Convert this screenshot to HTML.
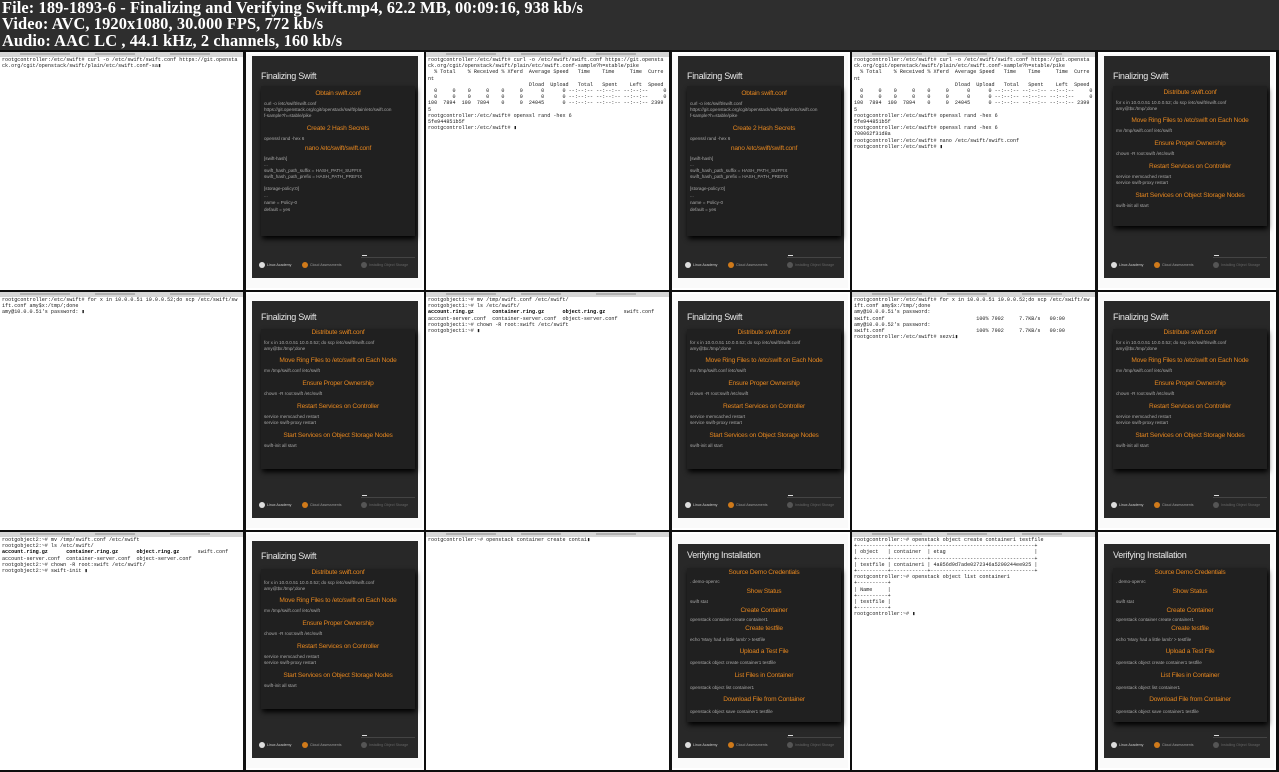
<!DOCTYPE html>
<html><head><meta charset="utf-8">
<style>
*{margin:0;padding:0;box-sizing:border-box}
html,body{width:1279px;height:772px;background:#0e0e0e;overflow:hidden}
.hdr{position:absolute;left:0;top:0;width:1279px;height:50px;background:#2e2e2e;color:#fff;font:bold 16.4px/16.4px "Liberation Serif",serif;padding:0 0 0 2px;white-space:pre;letter-spacing:0.1px}
.cell{position:absolute;width:424px;height:238px;background:#fff;overflow:hidden}
.tabs{position:absolute;left:0;top:0;width:243px;height:5px;background:#d6d6d6}
.tabs i{position:absolute;top:1px;height:2px;background:#b0b0b0}
.term{position:absolute;left:2px;top:5px;width:241px;font:5.1px/6.2px "Liberation Mono",monospace;color:#1a1a1a;white-space:pre;overflow:hidden}
.term b{font-weight:bold;color:#000}
.sep{position:absolute;left:243px;top:0;width:3px;height:238px;background:#111}
.frame{position:absolute;left:246px;top:2px;width:176px;height:234px;background:#fafafa}
.panel{position:absolute;left:252px;top:7px;width:166px;height:219px;background:#282828}
.title{position:absolute;left:261px;font:9px "Liberation Sans",sans-serif;color:#e6e6e6;letter-spacing:-0.3px}
.card{position:absolute;left:261px;top:36px;width:154px;background:#202020;box-shadow:1px 3px 5px #000}
.h{position:absolute;left:261px;width:154px;text-align:center;font:6.6px "Liberation Sans",sans-serif;color:#e5861f;letter-spacing:-0.2px;white-space:nowrap}
.b{position:absolute;left:264px;font:4.6px "Liberation Sans",sans-serif;color:#a8a8a8;white-space:nowrap}
.ft{position:absolute;top:211px;font:3.6px "Liberation Sans",sans-serif;color:#ccc;white-space:nowrap}
.cir{position:absolute;top:210px;width:6px;height:6px;border-radius:50%}
.ln{position:absolute;top:205px;left:361px;width:54px;height:1px;background:#444}
.dash{position:absolute;top:203px;left:362px;width:5px;height:1px;background:#ddd}
</style></head><body>
<div class="hdr">File: 189-1893-6 - Finalizing and Verifying Swift.mp4, 62.2 MB, 00:09:16, 938 kb/s
Video: AVC, 1920x1080, 30.000 FPS, 772 kb/s
Audio: AAC LC , 44.1 kHz, 2 channels, 160 kb/s</div>

<!-- CELL 1 -->
<div class="cell" style="left:0;top:52px">
<div class="tabs"><i style="left:20px;width:50px"></i><i style="left:95px;width:40px"></i><i style="left:170px;width:40px"></i></div>
<div class="term">rootgcontroller:/etc/swift# curl -o /etc/swift/swift.conf https://git.opensta
ck.org/cgit/openstack/swift/plain/etc/swift.conf-sa▮</div>
<div class="sep"></div><div class="frame"></div><div class="panel" style="top:4px;height:222px"></div>
<div class="title" style="top:19px">Finalizing Swift</div>
<div class="card" style="height:150px;top:34px"></div>
<div class="h" style="top:38px">Obtain swift.conf</div>
<div class="b" style="top:49px">curl -o /etc/swift/swift.conf</div>
<div class="b" style="top:55px">https://git.openstack.org/cgit/openstack/swift/plain/etc/swift.con</div>
<div class="b" style="top:61px">f-sample?h=stable/pike</div>
<div class="h" style="top:73px">Create 2 Hash Secrets</div>
<div class="b" style="top:84px">openssl rand -hex 6</div>
<div class="h" style="top:93px">nano /etc/swift/swift.conf</div>
<div class="b" style="top:104px">[swift-hash]</div>
<div class="b" style="top:110px">...</div>
<div class="b" style="top:116px">swift_hash_path_suffix = HASH_PATH_SUFFIX</div>
<div class="b" style="top:122px">swift_hash_path_prefix = HASH_PATH_PREFIX</div>
<div class="b" style="top:134px">[storage-policy:0]</div>
<div class="b" style="top:141px">...</div>
<div class="b" style="top:148px">name = Policy-0</div>
<div class="b" style="top:155px">default = yes</div>
<div class="ln"></div><div class="dash"></div>
<div class="cir" style="left:259px;background:#ddd"></div><div class="ft" style="left:267px">Linux Academy</div>
<div class="cir" style="left:302px;background:#d07a1a"></div><div class="ft" style="left:310px;color:#999">Cloud Assessments</div>
<div class="cir" style="left:361px;background:#555"></div><div class="ft" style="left:369px;color:#666">Installing Object Storage</div>
</div>

<!-- CELL 2 -->
<div class="cell" style="left:426px;top:52px">
<div class="tabs"><i style="left:20px;width:50px"></i><i style="left:95px;width:40px"></i><i style="left:170px;width:40px"></i></div>
<div class="term">rootgcontroller:/etc/swift# curl -o /etc/swift/swift.conf https://git.opensta
ck.org/cgit/openstack/swift/plain/etc/swift.conf-sample?h=stable/pike
  % Total    % Received % Xferd  Average Speed   Time    Time     Time  Curre
nt
                                 Dload  Upload   Total   Spent    Left  Speed
  0     0    0     0    0     0      0      0 --:--:-- --:--:-- --:--:--     0
  0     0    0     0    0     0      0      0 --:--:-- --:--:-- --:--:--     0
100  7894  100  7894    0     0  24045      0 --:--:-- --:--:-- --:--:-- 2399
5
rootgcontroller:/etc/swift# openssl rand -hex 6
5fe944851b5f
rootgcontroller:/etc/swift# ▮</div>
<div class="sep"></div><div class="frame"></div><div class="panel" style="top:4px;height:222px"></div>
<div class="title" style="top:19px">Finalizing Swift</div>
<div class="card" style="height:150px;top:34px"></div>
<div class="h" style="top:38px">Obtain swift.conf</div>
<div class="b" style="top:49px">curl -o /etc/swift/swift.conf</div>
<div class="b" style="top:55px">https://git.openstack.org/cgit/openstack/swift/plain/etc/swift.con</div>
<div class="b" style="top:61px">f-sample?h=stable/pike</div>
<div class="h" style="top:73px">Create 2 Hash Secrets</div>
<div class="b" style="top:84px">openssl rand -hex 6</div>
<div class="h" style="top:93px">nano /etc/swift/swift.conf</div>
<div class="b" style="top:104px">[swift-hash]</div>
<div class="b" style="top:110px">...</div>
<div class="b" style="top:116px">swift_hash_path_suffix = HASH_PATH_SUFFIX</div>
<div class="b" style="top:122px">swift_hash_path_prefix = HASH_PATH_PREFIX</div>
<div class="b" style="top:134px">[storage-policy:0]</div>
<div class="b" style="top:141px">...</div>
<div class="b" style="top:148px">name = Policy-0</div>
<div class="b" style="top:155px">default = yes</div>
<div class="ln"></div><div class="dash"></div>
<div class="cir" style="left:259px;background:#ddd"></div><div class="ft" style="left:267px">Linux Academy</div>
<div class="cir" style="left:302px;background:#d07a1a"></div><div class="ft" style="left:310px;color:#999">Cloud Assessments</div>
<div class="cir" style="left:361px;background:#555"></div><div class="ft" style="left:369px;color:#666">Installing Object Storage</div>
</div>

<!-- CELL 3 -->
<div class="cell" style="left:852px;top:52px">
<div class="tabs"><i style="left:20px;width:50px"></i><i style="left:95px;width:40px"></i><i style="left:170px;width:40px"></i></div>
<div class="term">rootgcontroller:/etc/swift# curl -o /etc/swift/swift.conf https://git.opensta
ck.org/cgit/openstack/swift/plain/etc/swift.conf-sample?h=stable/pike
  % Total    % Received % Xferd  Average Speed   Time    Time     Time  Curre
nt
                                 Dload  Upload   Total   Spent    Left  Speed
  0     0    0     0    0     0      0      0 --:--:-- --:--:-- --:--:--     0
  0     0    0     0    0     0      0      0 --:--:-- --:--:-- --:--:--     0
100  7894  100  7894    0     0  24045      0 --:--:-- --:--:-- --:--:-- 2399
5
rootgcontroller:/etc/swift# openssl rand -hex 6
5fe944851b5f
rootgcontroller:/etc/swift# openssl rand -hex 6
700062f31d8a
rootgcontroller:/etc/swift# nano /etc/swift/swift.conf
rootgcontroller:/etc/swift# ▮</div>
<div class="sep"></div><div class="frame"></div><div class="panel" style="top:4px;height:222px"></div>
<div class="title" style="top:19px">Finalizing Swift</div>
<div class="card" style="height:140px;top:34px"></div>
<div class="h" style="top:37px">Distribute swift.conf</div>
<div class="b" style="top:48px">for x in 10.0.0.51 10.0.0.52; do scp /etc/swift/swift.conf</div>
<div class="b" style="top:54px">amy@$x:/tmp/;done</div>
<div class="h" style="top:65px">Move Ring Files to /etc/swift on Each Node</div>
<div class="b" style="top:76px">mv /tmp/swift.conf /etc/swift</div>
<div class="h" style="top:88px">Ensure Proper Ownership</div>
<div class="b" style="top:99px">chown -R root:swift /etc/swift</div>
<div class="h" style="top:111px">Restart Services on Controller</div>
<div class="b" style="top:122px">service memcached restart</div>
<div class="b" style="top:128px">service swift-proxy restart</div>
<div class="h" style="top:140px">Start Services on Object Storage Nodes</div>
<div class="b" style="top:151px">swift-init all start</div>
<div class="ln"></div><div class="dash"></div>
<div class="cir" style="left:259px;background:#ddd"></div><div class="ft" style="left:267px">Linux Academy</div>
<div class="cir" style="left:302px;background:#d07a1a"></div><div class="ft" style="left:310px;color:#999">Cloud Assessments</div>
<div class="cir" style="left:361px;background:#555"></div><div class="ft" style="left:369px;color:#666">Installing Object Storage</div>
</div>

<!-- CELL 4 -->
<div class="cell" style="left:0;top:292px">
<div class="tabs"><i style="left:20px;width:50px"></i><i style="left:95px;width:40px"></i><i style="left:170px;width:40px"></i></div>
<div class="term">rootgcontroller:/etc/swift# for x in 10.0.0.51 10.0.0.52;do scp /etc/swift/sw
ift.conf amy$x:/tmp/;done
amy@10.0.0.51's password: ▮</div>
<div class="sep"></div><div class="frame"></div><div class="panel" style="top:9px;height:217px"></div>
<div class="title" style="top:20px">Finalizing Swift</div>
<div class="card" style="height:140px;top:37px"></div>
<div class="h" style="top:37px">Distribute swift.conf</div>
<div class="b" style="top:48px">for x in 10.0.0.51 10.0.0.52; do scp /etc/swift/swift.conf</div>
<div class="b" style="top:54px">amy@$x:/tmp/;done</div>
<div class="h" style="top:65px">Move Ring Files to /etc/swift on Each Node</div>
<div class="b" style="top:76px">mv /tmp/swift.conf /etc/swift</div>
<div class="h" style="top:88px">Ensure Proper Ownership</div>
<div class="b" style="top:99px">chown -R root:swift /etc/swift</div>
<div class="h" style="top:111px">Restart Services on Controller</div>
<div class="b" style="top:122px">service memcached restart</div>
<div class="b" style="top:128px">service swift-proxy restart</div>
<div class="h" style="top:140px">Start Services on Object Storage Nodes</div>
<div class="b" style="top:151px">swift-init all start</div>
<div class="ln"></div><div class="dash"></div>
<div class="cir" style="left:259px;background:#ddd"></div><div class="ft" style="left:267px">Linux Academy</div>
<div class="cir" style="left:302px;background:#d07a1a"></div><div class="ft" style="left:310px;color:#999">Cloud Assessments</div>
<div class="cir" style="left:361px;background:#555"></div><div class="ft" style="left:369px;color:#666">Installing Object Storage</div>
</div>

<!-- CELL 5 -->
<div class="cell" style="left:426px;top:292px">
<div class="tabs"><i style="left:20px;width:50px"></i><i style="left:95px;width:40px"></i><i style="left:170px;width:40px"></i></div>
<div class="term">rootgobject1:~# mv /tmp/swift.conf /etc/swift/
rootgobject1:~# ls /etc/swift/
<b>account.ring.gz</b>      <b>container.ring.gz</b>      <b>object.ring.gz</b>      swift.conf
account-server.conf  container-server.conf  object-server.conf
rootgobject1:~# chown -R root:swift /etc/swift
rootgobject1:~# ▮</div>
<div class="sep"></div><div class="frame"></div><div class="panel" style="top:9px;height:217px"></div>
<div class="title" style="top:20px">Finalizing Swift</div>
<div class="card" style="height:140px;top:37px"></div>
<div class="h" style="top:37px">Distribute swift.conf</div>
<div class="b" style="top:48px">for x in 10.0.0.51 10.0.0.52; do scp /etc/swift/swift.conf</div>
<div class="b" style="top:54px">amy@$x:/tmp/;done</div>
<div class="h" style="top:65px">Move Ring Files to /etc/swift on Each Node</div>
<div class="b" style="top:76px">mv /tmp/swift.conf /etc/swift</div>
<div class="h" style="top:88px">Ensure Proper Ownership</div>
<div class="b" style="top:99px">chown -R root:swift /etc/swift</div>
<div class="h" style="top:111px">Restart Services on Controller</div>
<div class="b" style="top:122px">service memcached restart</div>
<div class="b" style="top:128px">service swift-proxy restart</div>
<div class="h" style="top:140px">Start Services on Object Storage Nodes</div>
<div class="b" style="top:151px">swift-init all start</div>
<div class="ln"></div><div class="dash"></div>
<div class="cir" style="left:259px;background:#ddd"></div><div class="ft" style="left:267px">Linux Academy</div>
<div class="cir" style="left:302px;background:#d07a1a"></div><div class="ft" style="left:310px;color:#999">Cloud Assessments</div>
<div class="cir" style="left:361px;background:#555"></div><div class="ft" style="left:369px;color:#666">Installing Object Storage</div>
</div>

<!-- CELL 6 -->
<div class="cell" style="left:852px;top:292px">
<div class="tabs"><i style="left:20px;width:50px"></i><i style="left:95px;width:40px"></i><i style="left:170px;width:40px"></i></div>
<div class="term">rootgcontroller:/etc/swift# for x in 10.0.0.51 10.0.0.52;do scp /etc/swift/sw
ift.conf amy$x:/tmp/;done
amy@10.0.0.51's password:
swift.conf                              100% 7902     7.7KB/s   00:00
amy@10.0.0.52's password:
swift.conf                              100% 7902     7.7KB/s   00:00
rootgcontroller:/etc/swift# sezvi▮</div>
<div class="sep"></div><div class="frame"></div><div class="panel" style="top:9px;height:217px"></div>
<div class="title" style="top:20px">Finalizing Swift</div>
<div class="card" style="height:140px;top:37px"></div>
<div class="h" style="top:37px">Distribute swift.conf</div>
<div class="b" style="top:48px">for x in 10.0.0.51 10.0.0.52; do scp /etc/swift/swift.conf</div>
<div class="b" style="top:54px">amy@$x:/tmp/;done</div>
<div class="h" style="top:65px">Move Ring Files to /etc/swift on Each Node</div>
<div class="b" style="top:76px">mv /tmp/swift.conf /etc/swift</div>
<div class="h" style="top:88px">Ensure Proper Ownership</div>
<div class="b" style="top:99px">chown -R root:swift /etc/swift</div>
<div class="h" style="top:111px">Restart Services on Controller</div>
<div class="b" style="top:122px">service memcached restart</div>
<div class="b" style="top:128px">service swift-proxy restart</div>
<div class="h" style="top:140px">Start Services on Object Storage Nodes</div>
<div class="b" style="top:151px">swift-init all start</div>
<div class="ln"></div><div class="dash"></div>
<div class="cir" style="left:259px;background:#ddd"></div><div class="ft" style="left:267px">Linux Academy</div>
<div class="cir" style="left:302px;background:#d07a1a"></div><div class="ft" style="left:310px;color:#999">Cloud Assessments</div>
<div class="cir" style="left:361px;background:#555"></div><div class="ft" style="left:369px;color:#666">Installing Object Storage</div>
</div>

<!-- CELL 7 -->
<div class="cell" style="left:0;top:532px">
<div class="tabs"><i style="left:20px;width:50px"></i><i style="left:95px;width:40px"></i><i style="left:170px;width:40px"></i></div>
<div class="term">rootgobject2:~# mv /tmp/swift.conf /etc/swift
rootgobject2:~# ls /etc/swift/
<b>account.ring.gz</b>      <b>container.ring.gz</b>      <b>object.ring.gz</b>      swift.conf
account-server.conf  container-server.conf  object-server.conf
rootgobject2:~# chown -R root:swift /etc/swift/
rootgobject2:~# swift-init ▮</div>
<div class="sep"></div><div class="frame"></div><div class="panel" style="top:9px;height:217px"></div>
<div class="title" style="top:19px">Finalizing Swift</div>
<div class="card" style="height:140px;top:37px"></div>
<div class="h" style="top:37px">Distribute swift.conf</div>
<div class="b" style="top:48px">for x in 10.0.0.51 10.0.0.52; do scp /etc/swift/swift.conf</div>
<div class="b" style="top:54px">amy@$x:/tmp/;done</div>
<div class="h" style="top:65px">Move Ring Files to /etc/swift on Each Node</div>
<div class="b" style="top:76px">mv /tmp/swift.conf /etc/swift</div>
<div class="h" style="top:88px">Ensure Proper Ownership</div>
<div class="b" style="top:99px">chown -R root:swift /etc/swift</div>
<div class="h" style="top:111px">Restart Services on Controller</div>
<div class="b" style="top:122px">service memcached restart</div>
<div class="b" style="top:128px">service swift-proxy restart</div>
<div class="h" style="top:140px">Start Services on Object Storage Nodes</div>
<div class="b" style="top:151px">swift-init all start</div>
<div class="ln"></div><div class="dash"></div>
<div class="cir" style="left:259px;background:#ddd"></div><div class="ft" style="left:267px">Linux Academy</div>
<div class="cir" style="left:302px;background:#d07a1a"></div><div class="ft" style="left:310px;color:#999">Cloud Assessments</div>
<div class="cir" style="left:361px;background:#555"></div><div class="ft" style="left:369px;color:#666">Installing Object Storage</div>
</div>

<!-- CELL 8 -->
<div class="cell" style="left:426px;top:532px">
<div class="tabs"><i style="left:20px;width:50px"></i><i style="left:95px;width:40px"></i><i style="left:170px;width:40px"></i></div>
<div class="term">rootgcontroller:~# openstack container create contai▮</div>
<div class="sep"></div><div class="frame"></div><div class="panel" style="top:12px;height:214px"></div>
<div class="title" style="top:18px">Verifying Installation</div>
<div class="card" style="height:154px;top:36px"></div>
<div class="h" style="top:37px">Source Demo Credentials</div>
<div class="b" style="top:47px">. demo-openrc</div>
<div class="h" style="top:56px">Show Status</div>
<div class="b" style="top:67px">swift stat</div>
<div class="h" style="top:75px">Create Container</div>
<div class="b" style="top:85px">openstack container create container1</div>
<div class="h" style="top:93px">Create testfile</div>
<div class="b" style="top:105px">echo 'Mary had a little lamb' &gt; testfile</div>
<div class="h" style="top:116px">Upload a Test File</div>
<div class="b" style="top:128px">openstack object create container1 testfile</div>
<div class="h" style="top:140px">List Files in Container</div>
<div class="b" style="top:153px">openstack object list container1</div>
<div class="h" style="top:164px">Download File from Container</div>
<div class="b" style="top:177px">openstack object save container1 testfile</div>
<div class="ln"></div><div class="dash"></div>
<div class="cir" style="left:259px;background:#ddd"></div><div class="ft" style="left:267px">Linux Academy</div>
<div class="cir" style="left:302px;background:#d07a1a"></div><div class="ft" style="left:310px;color:#999">Cloud Assessments</div>
<div class="cir" style="left:361px;background:#555"></div><div class="ft" style="left:369px;color:#666">Installing Object Storage</div>
</div>

<!-- CELL 9 -->
<div class="cell" style="left:852px;top:532px">
<div class="tabs"><i style="left:20px;width:50px"></i><i style="left:95px;width:40px"></i><i style="left:170px;width:40px"></i></div>
<div class="term">rootgcontroller:~# openstack object create container1 testfile
+----------+------------+----------------------------------+
| object   | container  | etag                             |
+----------+------------+----------------------------------+
| testfile | container1 | 4a856d9d7ade0272346a5200244ee925 |
+----------+------------+----------------------------------+
rootgcontroller:~# openstack object list container1
+----------+
| Name     |
+----------+
| testfile |
+----------+
rootgcontroller:~# ▮</div>
<div class="sep"></div><div class="frame"></div><div class="panel" style="top:12px;height:214px"></div>
<div class="title" style="top:18px">Verifying Installation</div>
<div class="card" style="height:154px;top:36px"></div>
<div class="h" style="top:37px">Source Demo Credentials</div>
<div class="b" style="top:47px">. demo-openrc</div>
<div class="h" style="top:56px">Show Status</div>
<div class="b" style="top:67px">swift stat</div>
<div class="h" style="top:75px">Create Container</div>
<div class="b" style="top:85px">openstack container create container1</div>
<div class="h" style="top:93px">Create testfile</div>
<div class="b" style="top:105px">echo 'Mary had a little lamb' &gt; testfile</div>
<div class="h" style="top:116px">Upload a Test File</div>
<div class="b" style="top:128px">openstack object create container1 testfile</div>
<div class="h" style="top:140px">List Files in Container</div>
<div class="b" style="top:153px">openstack object list container1</div>
<div class="h" style="top:164px">Download File from Container</div>
<div class="b" style="top:177px">openstack object save container1 testfile</div>
<div class="ln"></div><div class="dash"></div>
<div class="cir" style="left:259px;background:#ddd"></div><div class="ft" style="left:267px">Linux Academy</div>
<div class="cir" style="left:302px;background:#d07a1a"></div><div class="ft" style="left:310px;color:#999">Cloud Assessments</div>
<div class="cir" style="left:361px;background:#555"></div><div class="ft" style="left:369px;color:#666">Installing Object Storage</div>
</div>
</body></html>
